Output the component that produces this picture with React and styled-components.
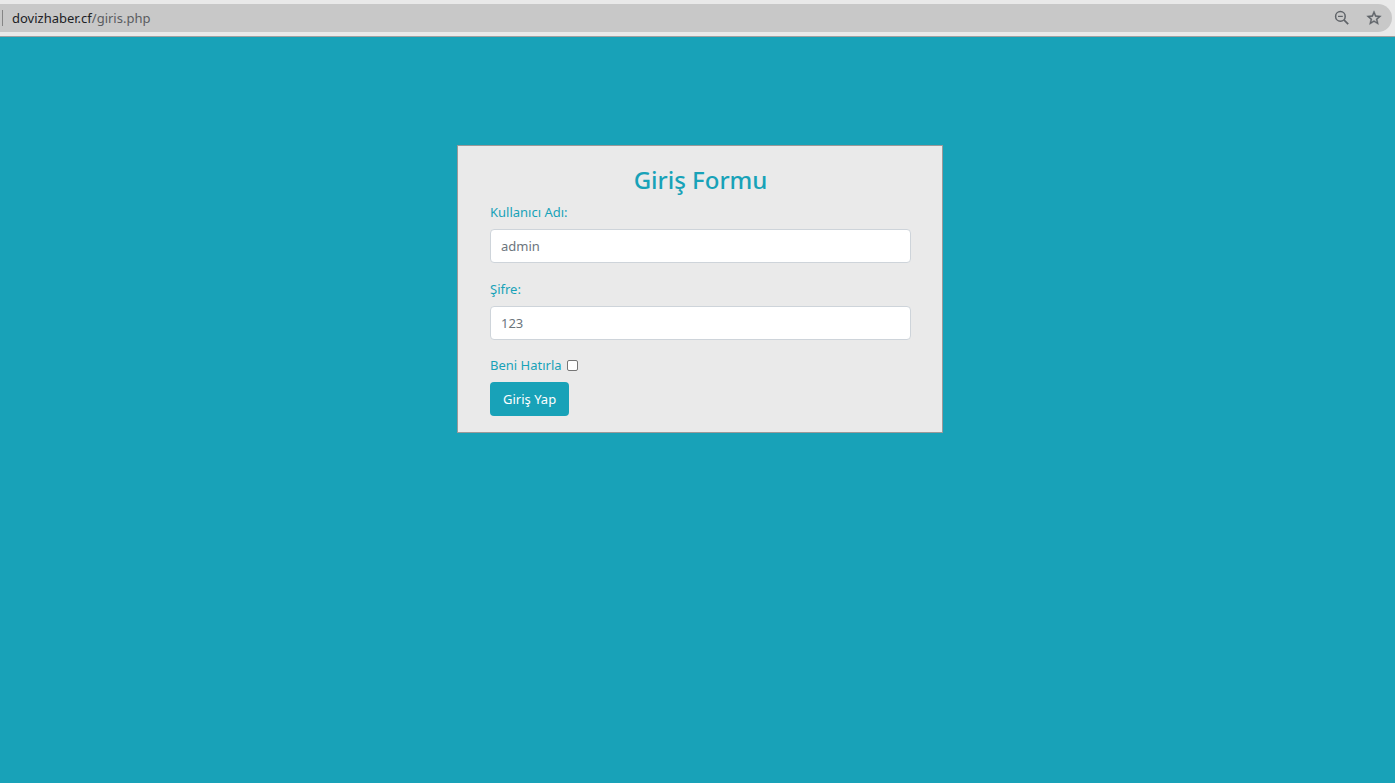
import React from "react";
import styled, { createGlobalStyle } from "styled-components";

const teal = "#18a2b8";

const GlobalStyle = createGlobalStyle`
  *, *::before, *::after { box-sizing: border-box; }
  body {
    margin: 0;
    background: ${teal};
    color: ${teal};
    font: 13px/22px "Noto Sans", "Open Sans", sans-serif;
  }
`;

const BrowserBar = styled.header`
  padding: 4px 3px 4px 0;
  background: #e9e9e9;
  border-bottom: 1px solid #a0a0a0;
`;

const AddressBar = styled.div`
  display: flex;
  align-items: center;
  height: 28px;
  padding-right: 10px;
  background: #c8c8c8;
  border-radius: 0 14px 14px 0;
`;

const Divider = styled.span`
  width: 1px;
  height: 16px;
  margin: 0 9px 0 2px;
  background: #858585;
`;

const Url = styled.span`
  flex: 1;
  color: #5a5c60;
`;

const Host = styled.span`
  color: #202124;
`;

const IconButton = styled.button`
  display: flex;
  padding: 0;
  margin-left: 16px;
  border: 0;
  background: none;
  color: #5f6368;
`;

const Main = styled.main`
  display: flex;
  justify-content: center;
  padding: 108px 0 32px 5px;
`;

const Card = styled.form`
  width: 100%;
  max-width: 486px;
  padding: 18px 31px 16px 32px;
  background: #eaeaea;
  border: 1px solid #999;
`;

const Title = styled.h1`
  margin: 0 0 5px;
  font-size: 24px;
  line-height: 32px;
  font-weight: 500;
  text-align: center;
`;

const Field = styled.div`
  display: flex;
  flex-direction: column;
  gap: 6px;
  margin-bottom: 15px;
`;

const TextInput = styled.input`
  width: 100%;
  height: 34px;
  padding: 0 10px;
  border: 1px solid #ced4da;
  border-radius: 4px;
  background: #fff;
  font: inherit;
  color: #6c757d;
`;

const Remember = styled.div`
  display: flex;
  align-items: center;
  gap: 5px;
  margin-bottom: 7px;
  line-height: 20px;
`;

const Checkbox = styled.input`
  appearance: none;
  width: 11px;
  height: 11px;
  margin: 0;
  border: 1px solid #767676;
  border-radius: 2px;
  background: #fff;
  &:checked { background: ${teal}; }
`;

const SubmitButton = styled.button`
  display: block;
  height: 34px;
  padding: 0 13px;
  border: 0;
  border-radius: 4px;
  background: ${teal};
  color: #fff;
  font: inherit;
`;

const ZoomOutIcon = () => (
  <svg width="16" height="16" viewBox="0 0 16 16" fill="none" stroke="currentColor" aria-hidden="true">
    <circle cx="6.4" cy="6.4" r="4.8" strokeWidth="1.5" />
    <path d="M9.9 9.9 14.2 14.2" strokeWidth="1.7" />
    <path d="M4 6.4h4.8" strokeWidth="1.2" />
  </svg>
);

const StarIcon = () => (
  <svg width="16" height="16" viewBox="1 1 22 22" fill="currentColor" stroke="currentColor" strokeWidth=".5" aria-hidden="true">
    <path d="M22 9.24l-7.19-.62L12 2 9.19 8.63 2 9.24l5.46 4.73L5.82 21 12 17.27 18.18 21l-1.63-7.03L22 9.24zM12 15.4l-3.76 2.27 1-4.28-3.32-2.88 4.38-.38L12 6.1l1.71 4.04 4.38.38-3.32 2.88 1 4.28L12 15.4z" />
  </svg>
);

export default function App() {
  return (
    <>
      <GlobalStyle />
      <BrowserBar>
        <AddressBar>
          <Divider />
          <Url><Host>dovizhaber.cf</Host>/giris.php</Url>
          <IconButton type="button" aria-label="Uzaklaştır"><ZoomOutIcon /></IconButton>
          <IconButton type="button" aria-label="Yer işareti ekle"><StarIcon /></IconButton>
        </AddressBar>
      </BrowserBar>
      <Main>
        <Card onSubmit={(e) => e.preventDefault()}>
          <Title>Giriş Formu</Title>
          <Field>
            <label htmlFor="username">Kullanıcı Adı:</label>
            <TextInput id="username" type="text" defaultValue="admin" />
          </Field>
          <Field>
            <label htmlFor="password">Şifre:</label>
            <TextInput id="password" type="text" defaultValue="123" />
          </Field>
          <Remember>
            <label htmlFor="remember">Beni Hatırla</label>
            <Checkbox id="remember" type="checkbox" />
          </Remember>
          <SubmitButton type="submit">Giriş Yap</SubmitButton>
        </Card>
      </Main>
    </>
  );
}
